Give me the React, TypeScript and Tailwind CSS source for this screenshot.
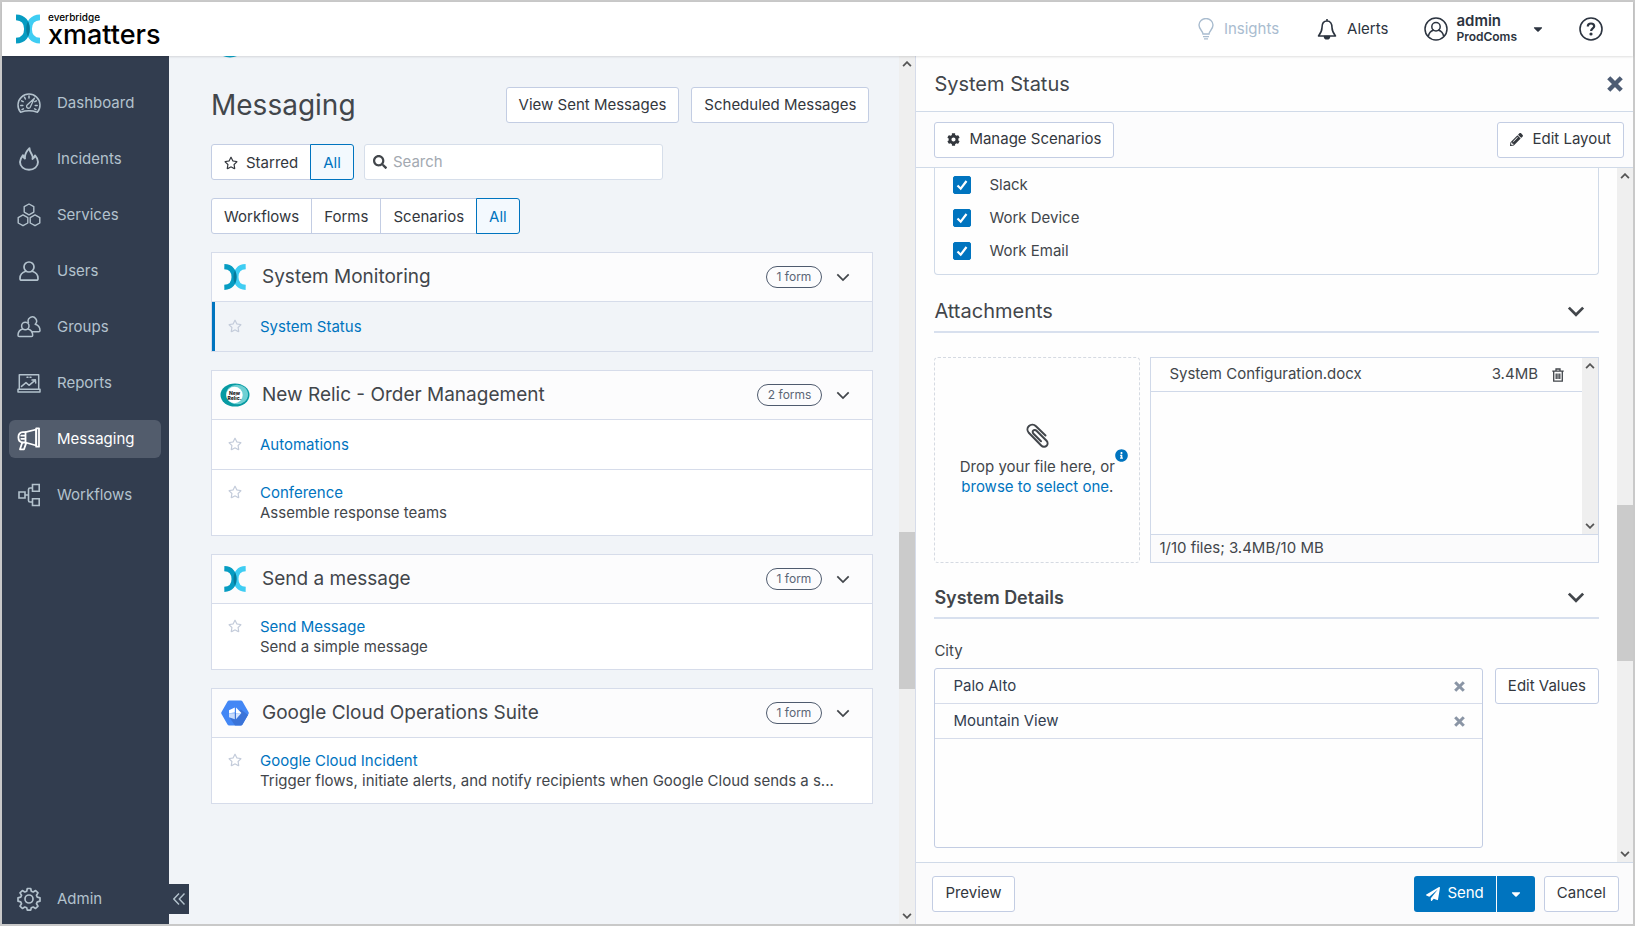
import React, { useState } from 'react';
import {
  FaCaretDown,
  FaCog,
  FaInfoCircle,
  FaPaperPlane,
  FaPencilAlt,
  FaRegStar,
  FaSearch,
} from 'react-icons/fa';

/* ---------- icons ---------- */

const iconProps = {
  viewBox: '0 0 24 24',
  fill: 'none',
  stroke: 'currentColor',
  strokeWidth: 1.5,
  strokeLinecap: 'round' as const,
  strokeLinejoin: 'round' as const,
  className: 'w-6 h-6 shrink-0',
  'aria-hidden': true,
};

const DashboardIcon = () => (
  <svg {...iconProps}>
    <path d="M3.6 21.2A11 11 0 1 1 20.4 21.2C15 19.4 9 19.4 3.6 21.2Z" />
    <path d="M12 5v2M7.5 6.2l.9 1.8M4.6 9.8l1.6.9M3.8 14.5h2M5 18.6l1.4-.8M19.4 9.8l-1.6.9M20.2 14.5h-2M19 18.6l-1.4-.8" />
    <path d="M17.4 7.2 10.4 13.8a1.9 1.9 0 1 0 2.8 2.4Z" strokeWidth="1.3" />
  </svg>
);

const IncidentsIcon = () => (
  <svg {...iconProps} strokeWidth={1.9}>
    <path d="M12.5 1.2C12.3 4.8 15 6.5 15.600 9.400c.2 1 .1 1.800-.1 2.600 1.300-.8 2.200-2 2.500-3.600 2 2.200 3 4.400 3 6.700 0 4.500-3.900 7.700-9 7.700s-9-3.200-9-7.700c0-2.800 1.400-4.800 3-6.900.3 1.600.9 2.700 2 3.400C7.400 7.200 9.500 4.200 12.500 1.200Z" />
  </svg>
);

const ServicesIcon = () => (
  <svg {...iconProps} strokeWidth={1.4}>
    <path d="M12 1l4.800 2.700v5.400L12 11.800 7.200 9.100V3.700Z" />
    <path d="M6 11.900l4.800 2.700V20L6 22.700 1.200 20v-5.400Z" />
    <path d="M18 11.900l4.800 2.700V20L18 22.700 13.200 20v-5.400Z" />
  </svg>
);

const UsersIcon = () => (
  <svg {...iconProps} strokeWidth={1.7}>
    <circle cx="12" cy="8" r="5" />
    <path d="M8.800 12.300C5 13.400 3 16.200 3 19.400c0 1 .7 1.800 1.700 1.800h14.600c1 0 1.700-.8 1.700-1.800 0-3.200-2-6-5.800-7.100" />
  </svg>
);

const GroupsIcon = () => (
  <svg {...iconProps}>
    <circle cx="8.300" cy="11" r="3.700" />
    <path d="M5.600 14C2.600 15 1 17.100 1 20.300c0 .8.500 1.300 1.200 1.300h12.300c.7 0 1.200-.5 1.200-1.300 0-3.200-1.600-5.300-4.700-6.300" />
    <path d="M11.400 7.600a4.200 4.200 0 1 1 6.800 1.600c3 .8 4.800 3 4.800 6.200 0 .8-.5 1.300-1.200 1.300h-7" />
  </svg>
);

const ReportsIcon = () => (
  <svg {...iconProps}>
    <path d="M2.300 18.300V3.800h19.400v14.500M1 18.300h22v2.600H1Z" />
    <path d="M4.500 15.400 9 11.600l3 2.700 6-5M15 8.900l3.400-.2.300 3.300M10 6.300h1M13 6.300h1" />
  </svg>
);

const MessagingIcon = () => (
  <svg {...iconProps} strokeWidth={1.8}>
    <path d="M8.500 5.200 19.200 2.500v16L8.500 15.500Z" />
    <path d="M19.200 1.300h2.800v18.400h-2.800Z" />
    <path d="M8.500 5.200H5.800C3 5.400 1.400 7.600 1.400 10.300s1.700 5 4.400 5.200h2.700M4.300 8.700h3.200M4.300 11.800h3.200" />
    <path d="M5.200 15.700 3 22.300h4l2.200-6.400" />
  </svg>
);

const WorkflowsIcon = () => (
  <svg {...iconProps} strokeLinejoin="miter" strokeWidth={1.6}>
    <path d="M2 9h6v6H2ZM15.500 1.500h6.700v6.700h-6.700ZM15.500 15.800h6.700v6.700h-6.700ZM8 12h3.500M15.500 5H13a1.500 1.500 0 0 0-1.500 1.500v11A1.500 1.500 0 0 0 13 19h2.500" />
  </svg>
);

const AdminIcon = () => (
  <svg {...iconProps} strokeWidth={1.7}>
    <circle cx="12" cy="12" r="4" />
    <path d="M10.300 1.500h3.400l.6 2.700 1.900.8 2.400-1.500 2.400 2.400L19.500 8.300l.8 1.900 2.700.6v3.400l-2.700.6-.8 1.900 1.500 2.400-2.400 2.400-2.400-1.500-1.900.8-.6 2.300h-3.400l-.6-2.300-1.900-.8-2.400 1.500L3 19.100l1.500-2.400-.8-1.900-2.700-.6v-3.400l2.700-.6.8-1.900L3 5.900l2.400-2.400L7.800 5l1.900-.8Z" />
  </svg>
);

const XLogo = ({ className }: { className: string }) => (
  <svg viewBox="0 0 23 28" fill="none" strokeWidth="5.5" className={className} aria-hidden="true">
    <path d="M23 2.800C15.500 3 12.500 8 12.500 14s3 11 10.500 11.200" stroke="#3fcdf3" />
    <path d="M0 2.800C7.500 3 10.500 8 10.500 14S7.500 25 0 25.200" stroke="#069cc2" />
    <path d="M11.500 6.800c2.200 4.300 2.200 10.100 0 14.400-2.200-4.300-2.200-10.100 0-14.400Z" fill="#067b9c" />
  </svg>
);

const NewRelicLogo = () => (
  <svg viewBox="0 0 30 24" className="w-[30px] h-6" aria-hidden="true">
    <ellipse cx="15" cy="12" rx="14.500" ry="11.600" fill="#079aa2" />
    <ellipse cx="17" cy="11.500" rx="11" ry="9.800" fill="#6fd0d3" />
    <circle cx="14.500" cy="12" r="8.200" fill="#fff" />
    <text x="14.500" y="11.500" textAnchor="middle" fontSize="5" fontWeight="800" fill="#222">New</text>
    <text x="14.500" y="16.500" textAnchor="middle" fontSize="5" fontWeight="800" fill="#222">Relic.</text>
  </svg>
);

const GoogleCloudLogo = () => (
  <svg viewBox="0 0 28 26" className="w-7 h-[26px]" aria-hidden="true">
    <path d="M8.200.5h11.600a2 2 0 0 1 1.700 1L27.500 12a2 2 0 0 1 0 2l-6 10.500a2 2 0 0 1-1.700 1H8.200a2 2 0 0 1-1.700-1L.5 14a2 2 0 0 1 0-2l6-10.500a2 2 0 0 1 1.700-1Z" fill="#4387f5" />
    <path d="M20 9.500 27 15l-5.500 9.500a2 2 0 0 1-1.700 1H14L8.500 17.500Z" fill="#3a73d8" />
    <path d="M8 10.200 13.800 7.400v5L8 13.200Z" fill="#fff" />
    <path d="M8 13.200h5.800v6L8 17.300Z" fill="#c9dcfc" />
    <path d="M15 7.400 20.400 13 15 13.200Z" fill="#fff" />
    <path d="M15 13.200 20.400 13 15 19.200Z" fill="#d5e4fd" />
  </svg>
);

const Chevron = ({ className, strokeWidth = 2 }: { className: string; strokeWidth?: number }) => (
  <svg viewBox="0 0 16 10" fill="none" stroke="currentColor" strokeWidth={strokeWidth} className={className} aria-hidden="true">
    <path d="M1.500 1.500 8 8l6.500-6.500" />
  </svg>
);

const CrossIcon = ({ className }: { className: string }) => (
  <svg viewBox="0 0 16 16" fill="none" stroke="currentColor" strokeWidth="4.4" strokeLinecap="square" className={className} aria-hidden="true">
    <path d="M3.300 3.300l9.400 9.400M12.700 3.300l-9.400 9.400" />
  </svg>
);

const BulbIcon = () => (
  <svg viewBox="0 0 16 22" fill="none" stroke="currentColor" strokeWidth="1.4" className="w-4 h-[22px]" aria-hidden="true">
    <path d="M5 16c0-3-4-4.500-4-9a7 6.500 0 0 1 14 0c0 4.500-4 6-4 9ZM5 18.600h6M6 20.900h4" />
  </svg>
);

const BellIcon = () => (
  <svg viewBox="0 0 20 22" fill="none" stroke="currentColor" strokeWidth="1.6" strokeLinejoin="round" className="w-5 h-[22px]" aria-hidden="true">
    <path d="M10 1v2M10 3C6.500 3 5 5.800 5 9.500c0 4-1.500 6-3.500 8.500h17C16.500 15.500 15 13.500 15 9.500 15 5.800 13.500 3 10 3Z" />
    <path d="M7.500 18.500h5a2.500 2.300 0 0 1-5 0Z" fill="currentColor" />
  </svg>
);

const AccountIcon = () => (
  <svg {...iconProps}>
    <circle cx="12" cy="12" r="11" />
    <circle cx="12" cy="9.800" r="4.200" />
    <path d="M9.500 13.200c-2.800.7-4.500 2.600-5 5.600M14.500 13.200c2.800.7 4.500 2.600 5 5.600" />
  </svg>
);

const HelpIcon = () => (
  <svg {...iconProps} strokeWidth={1.6}>
    <circle cx="12" cy="12" r="11" />
    <path d="M8.800 9.500c0-1.900 1.400-3 3.200-3s3.200 1 3.200 2.700c0 2.200-3.100 2.300-3.100 4.800" strokeWidth="2.2" strokeLinecap="butt" />
    <circle cx="12" cy="17" r=".8" fill="currentColor" />
  </svg>
);

const PaperclipIcon = () => (
  <svg viewBox="0 0 24 26" fill="none" stroke="currentColor" strokeWidth="2" strokeLinecap="round" className="w-6 h-[26px]" aria-hidden="true">
    <path d="M20.500 12.500 11 3.300C9 1.400 6 1.200 4 3s-2 4.800-.2 6.800l12.400 12.700c1.600 1.600 4 1.700 5.400.3s1.300-3.700-.3-5.300L11.500 7.700c-1-1-2.400-1.100-3.200-.2-.9.800-.8 2.200.2 3.200l7.500 7.600" />
  </svg>
);

const TrashIcon = () => (
  <svg viewBox="0 0 12 14" fill="none" stroke="currentColor" strokeWidth="1.3" className="w-3 h-[14px]" aria-hidden="true">
    <path d="M.3 3.200h11.400M4 3V1h4v2M1.700 3.200v10h8.600v-10M4.200 5.500v5.500M6 5.500v5.500M7.800 5.500v5.500" />
  </svg>
);

/* ---------- data ---------- */

const navItems = [
  { label: 'Dashboard', Icon: DashboardIcon },
  { label: 'Incidents', Icon: IncidentsIcon },
  { label: 'Services', Icon: ServicesIcon },
  { label: 'Users', Icon: UsersIcon },
  { label: 'Groups', Icon: GroupsIcon },
  { label: 'Reports', Icon: ReportsIcon },
  { label: 'Messaging', Icon: MessagingIcon },
  { label: 'Workflows', Icon: WorkflowsIcon },
];

const workflows = [
  {
    title: 'System Monitoring',
    count: '1 form',
    logo: <XLogo className="w-[22px] h-[26px]" />,
    forms: [{ name: 'System Status', description: '' }],
  },
  {
    title: 'New Relic - Order Management',
    count: '2 forms',
    logo: <NewRelicLogo />,
    forms: [
      { name: 'Automations', description: '' },
      { name: 'Conference', description: 'Assemble response teams' },
    ],
  },
  {
    title: 'Send a message',
    count: '1 form',
    logo: <XLogo className="w-[22px] h-[26px]" />,
    forms: [{ name: 'Send Message', description: 'Send a simple message' }],
  },
  {
    title: 'Google Cloud Operations Suite',
    count: '1 form',
    logo: <GoogleCloudLogo />,
    forms: [
      {
        name: 'Google Cloud Incident',
        description: 'Trigger flows, initiate alerts, and notify recipients when Google Cloud sends a s...',
      },
    ],
  },
];

const devices = ['Slack', 'Work Device', 'Work Email'];

/* ---------- pieces ---------- */

const buttonClass =
  'h-9 px-3 flex items-center justify-center whitespace-nowrap rounded-[3px] border border-[#c3cde3] bg-white text-[#33373d]';

const ScrollBar = ({ before, thumb, after }: { before: string; thumb: string; after: string }) => (
  <div className="w-4 shrink-0 bg-[#efefef] flex flex-col items-center text-[#555]">
    <Chevron className="w-[10px] h-[6px] my-[5px] rotate-180 shrink-0" strokeWidth={3} />
    <div className={before}></div>
    <div className={`w-full bg-[#cbcbcb] ${thumb}`}></div>
    <div className={after}></div>
    <Chevron className="w-[10px] h-[6px] my-[5px] shrink-0" strokeWidth={3} />
  </div>
);

const Segments = ({ items, active, onSelect }: { items: string[]; active: string; onSelect: (item: string) => void }) => (
  <div className="flex">
    {items.map((item) => (
      <button
        key={item}
        onClick={() => onSelect(item)}
        className={`h-9 px-3 pt-[2px] border flex items-center gap-2 not-first:-ml-px first:rounded-l-[3px] last:rounded-r-[3px] ${
          active === item ? 'relative border-[#0074bf] bg-[#f3f9fe] text-[#0074bf]' : 'border-[#c3cde3] bg-white text-[#33373d]'
        }`}
      >
        {item === 'Starred' && <FaRegStar className="w-[14px] h-[14px]" />}
        {item}
      </button>
    ))}
  </div>
);

const SectionHeader = ({ title, bold }: { title: string; bold?: boolean }) => (
  <div className="h-[42px] flex items-center justify-between border-b-2 border-[#d8e0ee] pr-[14px]">
    <h3 className={bold ? 'text-[18px] font-semibold' : 'text-[20px]'}>{title}</h3>
    <button aria-label={`Collapse ${title}`}>
      <Chevron className="w-[18px] h-[11px]" strokeWidth={2.5} />
    </button>
  </div>
);

const Header = () => (
  <header className="h-[54px] shrink-0 bg-white flex items-center justify-between pl-[14px] pr-[30px] shadow-[0_1px_2px_rgba(0,0,0,0.12)] relative">
    <a href="#" className="flex items-center gap-2 text-black">
      <XLogo className="w-6 h-[30px]" />
      <span className="flex flex-col">
        <span className="text-[10px] leading-3 font-medium">everbridge</span>
        <span className="text-[27px] leading-6 font-medium">xmatters</span>
      </span>
    </a>
    <div className="flex items-center text-[#2c3440]">
      <a href="#" className="flex items-center gap-[10px] text-[#a9bccf] mr-[38px]">
        <BulbIcon />
        Insights
      </a>
      <a href="#" className="flex items-center gap-[10px] mr-9">
        <BellIcon />
        Alerts
      </a>
      <button className="flex items-center gap-2 text-left mr-[34px]">
        <AccountIcon />
        <span className="flex flex-col font-semibold mr-[6px]">
          <span className="leading-4">admin</span>
          <span className="text-[12px] leading-4">ProdComs</span>
        </span>
        <FaCaretDown className="w-[14px] h-[14px]" />
      </button>
      <button aria-label="Help">
        <HelpIcon />
      </button>
    </div>
  </header>
);

const Sidebar = () => (
  <nav className="w-[167px] shrink-0 bg-[#323d4f] text-[#b3c2cd] flex flex-col pt-7 pb-[6px]">
    <ul className="flex flex-col gap-[18px] pl-[7px] pr-2">
      {navItems.map(({ label, Icon }) => (
        <li key={label}>
          <a
            href="#"
            className={`h-[38px] pl-2 rounded-[6px] flex items-center gap-4 ${
              label === 'Messaging' ? 'bg-[#525c6c] text-white' : ''
            }`}
          >
            <Icon />
            {label}
          </a>
        </li>
      ))}
    </ul>
    <div className="mt-auto flex items-center pl-[15px]">
      <a href="#" className="h-[38px] flex-1 flex items-center gap-4">
        <AdminIcon />
        Admin
      </a>
      <button aria-label="Collapse menu" className="w-5 h-[30px] -mr-5 relative z-10 bg-[#323d4f] flex items-center justify-center">
        <svg viewBox="0 0 12 12" fill="none" stroke="currentColor" strokeWidth="1.4" className="w-3 h-3" aria-hidden="true">
          <path d="M6 .5.800 6 6 11.500M11.500.5 6.300 6l5.200 5.500" />
        </svg>
      </button>
    </div>
  </nav>
);

const MessagingList = () => {
  const [starred, setStarred] = useState('All');
  const [kind, setKind] = useState('All');

  return (
    <main className="flex-1 min-w-0 flex bg-[#f1f4f8]">
      <div className="flex-1 min-w-0 overflow-hidden pl-[42px] pr-[26px]">
        {/* bottom edge of the logo that is scrolled out of view */}
        <svg viewBox="0 0 30 2" className="w-[30px] h-[2px] ml-1 mb-[29px]" aria-hidden="true">
          <ellipse cx="15" cy="-10" rx="14" ry="11.500" fill="#0aa5c9" />
        </svg>
        <div className="flex items-center justify-between">
          <h1 className="text-[28px] leading-9">Messaging</h1>
          <div className="flex gap-3 pr-1">
            <button className={buttonClass}>View Sent Messages</button>
            <button className={buttonClass}>Scheduled Messages</button>
          </div>
        </div>

        <div className="flex gap-[10px] mt-[21px]">
          <Segments items={['Starred', 'All']} active={starred} onSelect={setStarred} />
          <label className="w-[299px] h-9 px-2 flex items-center gap-[6px] bg-white border border-[#d6deea] rounded-[3px]">
            <FaSearch className="w-[14px] h-[14px] shrink-0" />
            <input type="text" aria-label="Search" placeholder="Search" className="w-full outline-none placeholder:text-[#a3a9b1]" />
          </label>
        </div>
        <div className="my-[18px]">
          <Segments items={['Workflows', 'Forms', 'Scenarios', 'All']} active={kind} onSelect={setKind} />
        </div>

        <div className="flex flex-col gap-[18px]">
          {workflows.map((workflow) => (
            <section key={workflow.title} className="border border-[#d6dcea] bg-white">
              <div className="h-12 bg-[#fcfcfd] flex items-center pl-2 pr-[22px]">
                <span className="w-[30px] flex justify-center mr-3">{workflow.logo}</span>
                <h2 className="flex-1 text-[19px]">{workflow.title}</h2>
                <span className="h-[22px] px-[10px] mr-[14px] flex items-center rounded-full border border-[#4f5b6e] text-[12px] text-[#5b6675]">
                  {workflow.count}
                </span>
                <button aria-label={`Collapse ${workflow.title}`}>
                  <Chevron className="w-[14px] h-[9px]" />
                </button>
              </div>
              {workflow.forms.map((form) => (
                <div
                  key={form.name}
                  className={`border-t border-[#d6dcea] flex gap-[18px] pr-8 ${
                    form.name === 'System Status' ? 'bg-[#f1f4f8] shadow-[inset_3px_0_0_#0074bf]' : ''
                  } ${form.description ? 'pt-[13px] pb-3' : 'pt-[15px] pb-[14px]'}`}
                >
                  <button aria-label={`Star ${form.name}`} className="ml-4 h-[18px] text-[#c3cbda]">
                    <FaRegStar className="w-[14px] h-[14px]" />
                  </button>
                  <div className="min-w-0 leading-5">
                    <a href="#" className="block text-[#0074bf]">{form.name}</a>
                    {form.description && <p className="truncate">{form.description}</p>}
                  </div>
                </div>
              ))}
            </section>
          ))}
        </div>
      </div>
      <ScrollBar before="flex-[461]" thumb="flex-[157]" after="flex-[219]" />
    </main>
  );
};

const AttachmentsSection = () => (
  <section className="mt-4">
    <SectionHeader title="Attachments" />
    <div className="flex gap-[10px] mt-6">
      <div className="w-[206px] h-[206px] shrink-0 rounded-[4px] border border-dashed border-[#d5dae2] flex flex-col items-center justify-center">
        <PaperclipIcon />
        <p className="mt-2 leading-5 text-center">
          <span className="relative">
            Drop your file here, or
            <FaInfoCircle className="absolute left-full -top-2 w-[13px] h-[13px] text-[#0074bf]" />
          </span>
          <br />
          <a href="#" className="text-[#0074bf]">browse to select one</a>.
        </p>
      </div>
      <div className="flex-1 h-[206px] flex flex-col border border-[#d0d9e9]">
        <div className="flex-1 flex">
          <ul className="flex-1">
            <li className="h-[34px] flex items-center pl-[18px] pr-[18px] border-b border-[#d0d9e9]">
              <span className="flex-1">System Configuration.docx</span>
              <span className="mr-[14px]">3.4MB</span>
              <button aria-label="Delete System Configuration.docx">
                <TrashIcon />
              </button>
            </li>
          </ul>
          <ScrollBar before="flex-1" thumb="h-0" after="flex-1" />
        </div>
        <p className="h-7 px-2 flex items-center bg-[#fbfbfc] border-t border-[#d0d9e9]">1/10 files; 3.4MB/10 MB</p>
      </div>
    </div>
  </section>
);

const DetailsSection = () => {
  const [cities, setCities] = useState(['Palo Alto', 'Mountain View']);

  return (
    <section className="mt-[14px]">
      <SectionHeader title="System Details" bold />
      <h4 className="mt-[22px] mb-[7px] leading-5">City</h4>
      <div className="flex items-start gap-3">
        <ul className="flex-1 h-[180px] rounded-[3px] border border-[#c3cde3] text-[#323d4f]">
          {cities.map((city) => (
            <li key={city} className="h-[35px] flex items-center justify-between pl-[18px] pr-[17px] border-b border-[#d6dcea]">
              {city}
              <button
                aria-label={`Remove ${city}`}
                onClick={() => setCities(cities.filter((c) => c !== city))}
                className="text-[#8a95a5]"
              >
                <CrossIcon className="w-[11px] h-[11px]" />
              </button>
            </li>
          ))}
        </ul>
        <button className={buttonClass}>Edit Values</button>
      </div>
    </section>
  );
};

const FormPanel = () => (
  <aside className="w-[44%] shrink-0 flex flex-col bg-[#fefefe] border-l border-[#d6dcea]">
    <div className="h-14 shrink-0 flex items-center justify-between pl-[18px] pr-[10px] border-b border-[#d0dae8]">
      <h2 className="text-[20px]">System Status</h2>
      <button aria-label="Close" className="text-[#4d5c73]">
        <CrossIcon className="w-4 h-4" />
      </button>
    </div>
    <div className="h-14 shrink-0 flex items-center justify-between pl-[18px] pr-[9px] bg-[#fcfcfd] border-b border-[#d0dae8]">
      <button className={`${buttonClass} gap-[9px]`}>
        <FaCog className="w-[13px] h-[13px]" />
        Manage Scenarios
      </button>
      <button className={`${buttonClass} gap-[9px]`}>
        <FaPencilAlt className="w-[13px] h-[13px]" />
        Edit Layout
      </button>
    </div>

    <div className="flex-1 min-h-0 flex">
      <div className="flex-1 overflow-hidden px-[18px]">
        <div className="flex flex-col gap-[15px] pl-[18px] pt-2 pb-[14px] border border-t-0 border-[#d0dae8] rounded-b-[4px]">
          {devices.map((device) => (
            <label key={device} className="flex items-center gap-[18px] leading-[18px]">
              <span className="grid">
                <input
                  type="checkbox"
                  defaultChecked
                  className="peer col-start-1 row-start-1 appearance-none w-[18px] h-[18px] rounded-[2px] border border-[#0074bf] checked:bg-[#0074bf]"
                />
                <svg
                  viewBox="0 0 18 18"
                  fill="none"
                  stroke="white"
                  strokeWidth="2.2"
                  className="col-start-1 row-start-1 w-[18px] h-[18px] pointer-events-none invisible peer-checked:visible"
                  aria-hidden="true"
                >
                  <path d="M4.500 9.500 7.700 12.700 13.500 5" />
                </svg>
              </span>
              {device}
            </label>
          ))}
        </div>
        <AttachmentsSection />
        <DetailsSection />
      </div>
      <ScrollBar before="flex-[320]" thumb="flex-[156]" after="flex-[184]" />
    </div>

    <div className="h-[62px] shrink-0 flex items-center justify-between pl-4 pr-[14px] bg-[#fbfbfc] border-t border-[#d0dae8]">
      <button className={buttonClass}>Preview</button>
      <div className="flex">
        <button className="h-9 px-3 flex items-center gap-[7px] rounded-l-[3px] bg-[#0074bf] text-white">
          <FaPaperPlane className="w-[14px] h-[14px]" />
          Send
        </button>
        <button aria-label="More send options" className="w-[38px] h-9 ml-px mr-[9px] flex items-center justify-center rounded-r-[3px] bg-[#0074bf] text-white">
          <FaCaretDown className="w-[14px] h-[14px]" />
        </button>
        <button className={buttonClass}>Cancel</button>
      </div>
    </div>
  </aside>
);

const App = () => {
  return (
    <div className="h-screen flex flex-col border-2 border-[#c9c9c9] bg-white font-['Inter','Liberation_Sans',sans-serif] text-[15px] text-[#42464b]">
      <Header />
      <div className="flex-1 min-h-0 flex">
        <Sidebar />
        <MessagingList />
        <FormPanel />
      </div>
    </div>
  );
};

export default App;
